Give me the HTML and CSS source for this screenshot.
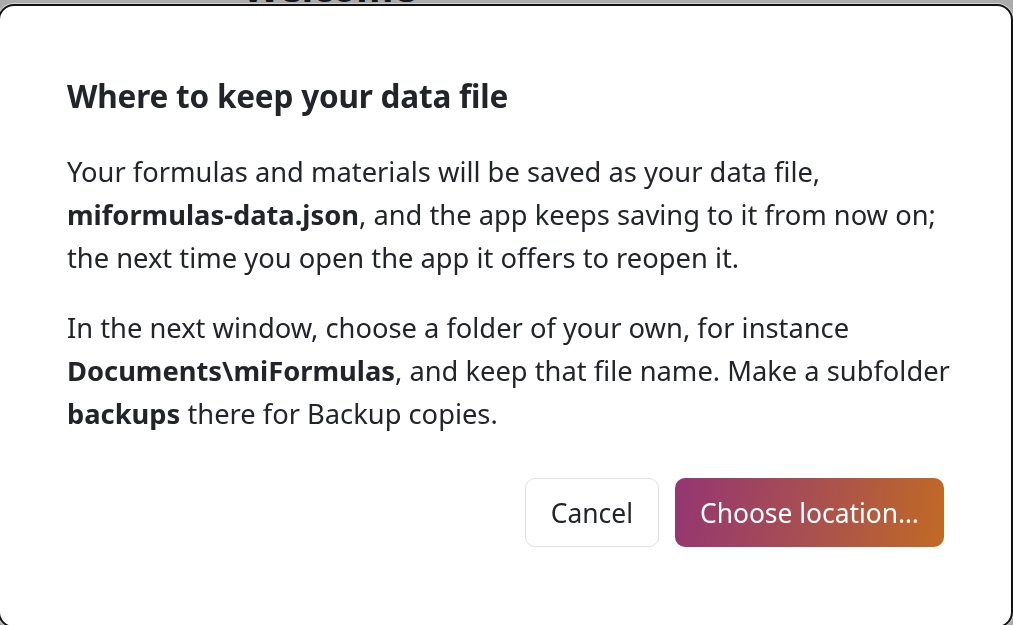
FILE: index.html
```html
<!DOCTYPE html>
<html lang="en">
<head>
<meta charset="utf-8">
<title>Where to keep your data file</title>
<link rel="stylesheet" href="styles.css">
</head>
<body>
<main class="page">
  <h1 class="page-title">Welcome</h1>
</main>
<div class="backdrop"></div>
<section class="dialog" role="dialog" aria-labelledby="dlg-title">
  <h2 class="dialog-title" id="dlg-title">Where to keep your data file</h2>
  <p class="dialog-text">Your formulas and materials will be saved as your data file, <strong>miformulas-data.json</strong>, and the app keeps saving to it from now on; the next time you open the app it offers to reopen it.</p>
  <p class="dialog-text">In the next window, choose a folder of your own, for instance <strong>Documents\miFormulas</strong>, and keep that file name. Make a subfolder <strong>backups</strong> there for Backup copies.</p>
  <div class="dialog-actions">
    <button class="btn btn-secondary" type="button">Cancel</button>
    <button class="btn btn-primary" type="button">Choose location…</button>
  </div>
</section>
</body>
</html>
```
FILE: styles.css
```css
html, body {
  margin: 0;
  padding: 0;
  height: 100%;
  overflow: hidden;
  background: #ffffff;
  font-family: "Noto Sans", "Open Sans", sans-serif;
  color: #212529;
}

.page {
  display: flex;
  justify-content: flex-start;
  padding-left: 243px;
}

.page-title {
  margin: -32px 0 0 0;
  font-size: 38px;
  font-weight: 700;
  line-height: 1;
  color: #212529;
}

.backdrop {
  position: fixed;
  inset: 0;
  background: rgba(0, 0, 0, 0.33);
}

.dialog {
  position: absolute;
  top: 4px;
  left: -2px;
  width: 1015px;
  height: 624px;
  box-sizing: border-box;
  padding: 70px 50px 0 67px;
  background: #ffffff;
  border: 2px solid #121212;
  border-radius: 16px;
  box-shadow: 0 0 0 1px rgba(255, 255, 255, 0.45);
}

.dialog-title {
  margin: 0 0 34px 0;
  font-size: 31.5px;
  font-weight: 700;
  line-height: 40px;
  letter-spacing: -0.2px;
}

.dialog-text {
  margin: 0 0 27px 0;
  font-size: 27.3px;
  line-height: 43px;
}

.dialog-text strong {
  font-weight: 700;
  white-space: nowrap;
}

.dialog-actions {
  display: flex;
  justify-content: flex-end;
  gap: 16px;
  margin-top: 43px;
  margin-right: 17px;
}

.btn {
  height: 69px;
  padding: 0 25px;
  border-radius: 10px;
  font-family: inherit;
  font-size: 26.4px;
  cursor: pointer;
}

.btn-secondary {
  background: #ffffff;
  color: #212529;
  border: 1px solid #dee2e6;
}

.btn-primary {
  background: linear-gradient(100deg, #943672 0%, #a84f52 50%, #c16a24 100%);
  color: #ffffff;
  border: 0;
}
```
